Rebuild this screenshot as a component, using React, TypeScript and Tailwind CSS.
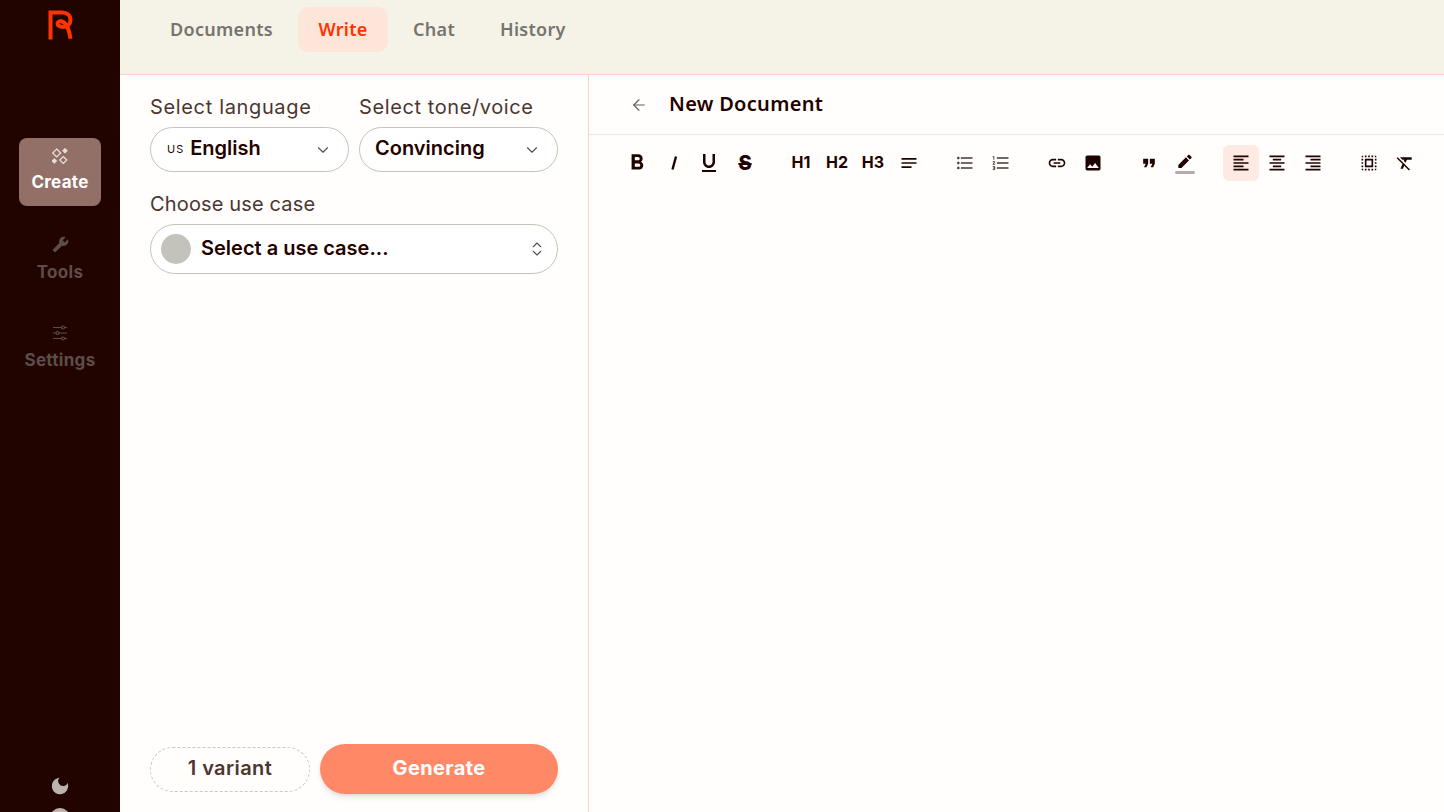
import {
  MdBorderColor,
  MdBuild,
  MdDarkMode,
  MdFormatAlignCenter,
  MdFormatAlignLeft,
  MdFormatAlignRight,
  MdFormatBold,
  MdFormatClear,
  MdFormatListBulleted,
  MdFormatListNumbered,
  MdFormatQuote,
  MdFormatUnderlined,
  MdImage,
  MdLink,
  MdNotes,
  MdSelectAll,
} from "react-icons/md";
import { ArrowLeft, ChevronDown, ChevronsUpDown } from "lucide-react";
import type { ReactNode } from "react";

const FONT = "font-['Inter','Liberation_Sans',sans-serif]";

function Sparkles() {
  return (
    <svg width="16" height="16" viewBox="0 0 16 16" fill="none" stroke="currentColor" strokeWidth="1.200" className="block">
      <path d="M4.700 1 8.700 5 4.700 9 .7 5Z" />
      <path d="M13 .7 15 2.700 13 4.700 11 2.700Z" fill="currentColor" />
      <path d="M2.300 11 4.300 13 2.300 15 .3 13Z" fill="currentColor" />
      <path d="M11.300 8.500 14.800 12 11.300 15.500 7.800 12Z" />
    </svg>
  );
}

function Sliders() {
  return (
    <svg width="16" height="16" viewBox="0 0 16 16" fill="none" stroke="currentColor" strokeWidth="1.100" className="block">
      <path d="M1 2.500h8.500M12.500 2.500H15M1 8h3M7 8h8M1 13.500h8.500M12.500 13.500H15" />
      <circle cx="11" cy="2.500" r="1.500" />
      <circle cx="5.500" cy="8" r="1.500" />
      <circle cx="11" cy="13.500" r="1.500" />
    </svg>
  );
}

function Logo() {
  return (
    <svg width="26" height="30" viewBox="0 0 26 30" fill="none" stroke="#ff3300" strokeWidth="4" className="block">
      <path d="M2.500 29.500V2.500H14c5 0 8.500 3 8.500 7.500s-3.500 7-7.500 7c-3 0-5.500-1.300-5.500-3.200s2-3 4-2.500c4.500 1 7.500 8 9 17.500" />
    </svg>
  );
}

function NavItem({ icon, label, active }: { icon: ReactNode; label: string; active?: boolean }) {
  return (
    <div
      className={`flex h-[68px] w-[82px] flex-col items-center justify-center rounded-lg text-[17px] font-bold ${
        active ? "gap-[8px] bg-[#927068] pb-1 text-white" : "gap-[9px] pb-[2px] text-[#5d4d49]"
      }`}
    >
      <span className={active ? "text-[#e8dfdc]" : ""}>{icon}</span>
      <span className="leading-5 tracking-[0.3px]">{label}</span>
    </div>
  );
}

function Sidebar() {
  return (
    <aside className={`flex h-full w-[120px] shrink-0 flex-col items-center overflow-hidden bg-[#210400] ${FONT}`}>
      <div className="mt-[10px] ml-[1px]">
        <Logo />
      </div>
      <nav className="mt-[98px] flex flex-col items-center gap-5">
        <NavItem active icon={<Sparkles />} label="Create" />
        <NavItem icon={<MdBuild size={17} className="-scale-x-100" />} label="Tools" />
        <NavItem icon={<Sliders />} label="Settings" />
      </nav>
      <div className="mt-auto mb-[-16px] flex flex-col items-center gap-[11px] text-[#bcb3af]">
        <MdDarkMode size={22} className="-rotate-12" />
        <span className="h-5 w-5 rounded-full bg-[#bcb3af]" />
      </div>
    </aside>
  );
}

function Tabs() {
  const tabs = ["Documents", "Write", "Chat", "History"];
  return (
    <header className="flex h-[75px] shrink-0 items-start gap-[5px] border-b border-[#ffd0c0] bg-[#f5f3e7] pt-[7px] pl-[30px] font-['Noto_Sans',sans-serif] text-[18px] font-semibold tracking-[0.3px]">
      {tabs.map((t) => (
        <div
          key={t}
          className={`flex h-[45px] items-center justify-center rounded-[10px] px-5 ${
            t === "Write" ? "w-[90px] bg-[#fde5da] text-[#ff3300]" : "text-[#77746f]"
          }`}
        >
          {t}
        </div>
      ))}
    </header>
  );
}

function Select({ children }: { children: ReactNode }) {
  return (
    <div className="flex h-[45px] items-center rounded-full border border-[#c4c3bb] bg-white pb-1 text-[20px] font-semibold text-[#1f0300]">
      {children}
    </div>
  );
}

function LeftPanel() {
  return (
    <section className={`flex w-[469px] shrink-0 flex-col border-r border-[#ffd0c0] px-[30px] pt-[19px] pb-[18px] ${FONT}`}>
      <div className="grid grid-cols-[199px_199px] gap-x-[10px]">
        <div>
          <div className="mb-[7px] text-[20px] leading-[26px] tracking-[0.65px] text-[#4b3632]">Select language</div>
          <Select>
            <span className="ml-4 mr-[6px] mt-1 text-[11px] font-normal tracking-[1px]">US</span>
            English
            <ChevronDown size={18} strokeWidth={1.5} className="ml-auto mr-4 mt-1 text-[#55504c]" />
          </Select>
        </div>
        <div>
          <div className="mb-[7px] text-[20px] leading-[26px] tracking-[0.6px] text-[#4b3632]">Select tone/voice</div>
          <Select>
            <span className="ml-[15px]">Convincing</span>
            <ChevronDown size={18} strokeWidth={1.5} className="ml-auto mr-4 mt-1 text-[#55504c]" />
          </Select>
        </div>
      </div>
      <div className="mt-[19px] mb-[7px] text-[20px] leading-[26px] tracking-[0.15px] text-[#4b3632]">Choose use case</div>
      <div className="flex h-[50px] w-full items-center rounded-full border border-[#c4c3bb] bg-white text-[20px] font-semibold text-[#1f0300]">
        <span className="mx-[10px] h-[30px] w-[30px] rounded-full bg-[#c4c3bb]" />
        <span className="pb-[2px]">Select a use case...</span>
        <ChevronsUpDown size={18} strokeWidth={1.5} className="ml-auto mr-[11px] text-[#55504c]" />
      </div>
      <div className="mt-auto flex items-center gap-[10px]">
        <div className="flex h-[45px] w-[160px] items-center justify-center rounded-full border border-dashed border-[#c9c8c2] pb-[2px] text-[20px] font-semibold tracking-[0.4px] text-[#4b3632]">
          1 variant
        </div>
        <button className="h-[50px] w-[238px] rounded-full bg-[#ff8966] pb-[2px] text-[20px] font-bold tracking-[0.4px] text-white shadow-md shadow-black/10">
          Generate
        </button>
      </div>
    </section>
  );
}

function ToolButton({ children, active }: { children: ReactNode; active?: boolean }) {
  return (
    <div
      className={`flex h-9 w-9 items-center justify-center rounded-md text-[#1f0300] ${active ? "bg-[#ffe9e3]" : ""}`}
    >
      {children}
    </div>
  );
}

function Toolbar() {
  const icon = 20;
  return (
    <div className={`flex items-center gap-5 pt-[10px] pl-[30px] ${FONT}`}>
      <div className="flex">
        <ToolButton><MdFormatBold size={26} /></ToolButton>
        <ToolButton>
          <svg width="14" height="16" viewBox="0 0 14 16" fill="none" stroke="currentColor" strokeWidth="2.400" className="block">
            <path d="M10 1.500 6.500 14.500" />
          </svg>
        </ToolButton>
        <ToolButton><MdFormatUnderlined size={24} /></ToolButton>
        <ToolButton><span className="text-[20px] leading-none font-extrabold line-through">S</span></ToolButton>
      </div>
      <div className="flex text-[16px] font-bold">
        <ToolButton><span className="pb-[3px]">H1</span></ToolButton>
        <ToolButton><span className="pb-[3px]">H2</span></ToolButton>
        <ToolButton><span className="pb-[3px]">H3</span></ToolButton>
        <ToolButton><MdNotes size={icon} /></ToolButton>
      </div>
      <div className="flex">
        <ToolButton><MdFormatListBulleted size={icon} className="text-[#4b3632]" /></ToolButton>
        <ToolButton><MdFormatListNumbered size={icon} className="text-[#4b3632]" /></ToolButton>
      </div>
      <div className="flex">
        <ToolButton><MdLink size={icon} /></ToolButton>
        <ToolButton><MdImage size={icon} /></ToolButton>
      </div>
      <div className="flex">
        <ToolButton><MdFormatQuote size={icon} /></ToolButton>
        <ToolButton>
          <span className="flex flex-col items-center">
            <MdBorderColor size={icon} className="[clip-path:inset(0_0_20%_0)]" />
            <span className="-mt-[2px] h-[3px] w-5 rounded-full bg-[#b5aca8]" />
          </span>
        </ToolButton>
      </div>
      <div className="flex">
        <ToolButton active><MdFormatAlignLeft size={icon} /></ToolButton>
        <ToolButton><MdFormatAlignCenter size={icon} /></ToolButton>
        <ToolButton><MdFormatAlignRight size={icon} /></ToolButton>
      </div>
      <div className="flex">
        <ToolButton><MdSelectAll size={icon} /></ToolButton>
        <ToolButton><MdFormatClear size={icon} /></ToolButton>
      </div>
    </div>
  );
}

function Editor() {
  return (
    <section className="flex min-w-0 flex-1 flex-col">
      <div className="flex h-[60px] items-center gap-[21px] border-b border-[#ece9e4] pl-[41px] pb-[1px]">
        <ArrowLeft size={18} strokeWidth={1.5} className="mt-[2px] text-[#6b5a56]" />
        <span className="font-['Noto_Sans',sans-serif] text-[20px] font-semibold tracking-[0.3px] text-[#1f0300]">New Document</span>
      </div>
      <Toolbar />
    </section>
  );
}

export default function App() {
  return (
    <div className="flex h-[812px] w-full overflow-hidden bg-[#fffefc]">
      <Sidebar />
      <main className="flex min-w-0 flex-1 flex-col">
        <Tabs />
        <div className="flex min-h-0 flex-1">
          <LeftPanel />
          <Editor />
        </div>
      </main>
    </div>
  );
}
